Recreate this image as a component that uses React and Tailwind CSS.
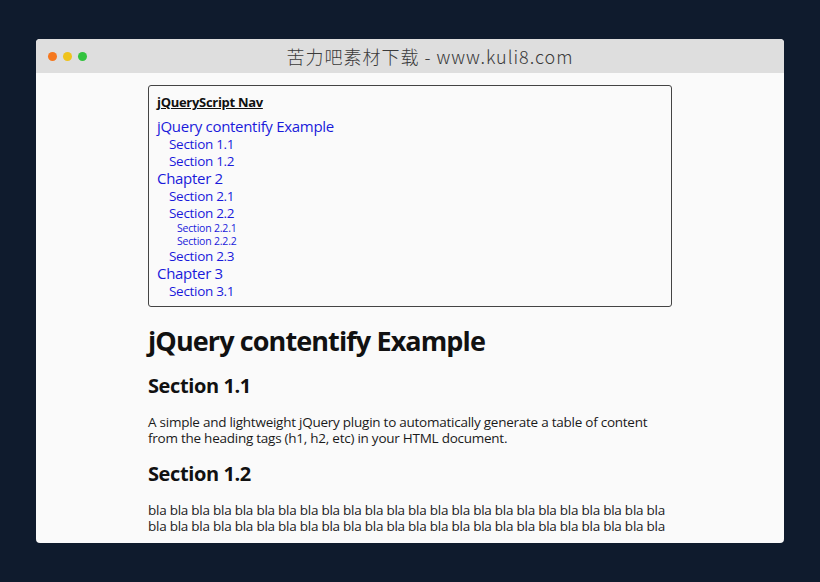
export default function App() {
  const toc = [
    { label: "jQuery contentify Example", level: 1 },
    { label: "Section 1.1", level: 2 },
    { label: "Section 1.2", level: 2 },
    { label: "Chapter 2", level: 1 },
    { label: "Section 2.1", level: 2 },
    { label: "Section 2.2", level: 2 },
    { label: "Section 2.2.1", level: 3 },
    { label: "Section 2.2.2", level: 3 },
    { label: "Section 2.3", level: 2 },
    { label: "Chapter 3", level: 1 },
    { label: "Section 3.1", level: 2 },
  ];

  const levelClass = {
    1: "text-[15px] leading-[17px] pl-0 mt-[1px] tracking-[-0.3px]",
    2: "text-[13.5px] leading-[16px] pl-[12px] mt-[1px] tracking-[-0.3px]",
    3: "text-[10.5px] leading-[12px] pl-[20px] mt-[1px] tracking-[-0.2px]",
  };

  return (
    <div className="min-h-screen bg-[#0f1b2d] px-[36px] pt-[39px] pb-[39px]">
      <div
        className="h-[504px] w-[748px] overflow-hidden rounded-[4px] bg-[#fafafa]"
        style={{ fontFamily: '"Open Sans", "Noto Sans", sans-serif' }}
      >
        {/* window bar */}
        <div className="relative flex h-[34px] items-center bg-[#dedede]">
          <div className="flex gap-[6px] pl-[12px]">
            <span className="h-[9px] w-[9px] rounded-full bg-[#f5781f]" />
            <span className="h-[9px] w-[9px] rounded-full bg-[#efc31c]" />
            <span className="h-[9px] w-[9px] rounded-full bg-[#33c33f]" />
          </div>
          <div
            className="absolute inset-0 flex items-center justify-center pl-[40px] text-[18px] tracking-[1px] text-[#3a3a3a]"
            style={{ fontFamily: '"Noto Sans CJK SC", "DejaVu Sans", sans-serif', fontWeight: 300 }}
          >
            苦力吧素材下载 - www.kuli8.com
          </div>
        </div>

        {/* page */}
        <div className="mx-auto w-[524px] pt-[12px] text-[#111]">
          <nav className="rounded-[3px] border border-[#444] px-[8px] pt-[8px] pb-[7px]">
            <div className="mb-[7px] text-[13px] font-bold leading-[17px] tracking-[-0.3px] text-[#111] underline">
              jQueryScript Nav
            </div>
            {toc.map((t) => (
              <div key={t.label} className={`${levelClass[t.level]} text-[#1a1adb]`}>
                {t.label}
              </div>
            ))}
          </nav>

          <h1 className="mt-[17px] text-[27px] font-bold leading-[34px] tracking-[-0.9px] text-[#111]">
            jQuery contentify Example
          </h1>
          <h2 className="mt-[16px] text-[20px] font-bold leading-[24px] tracking-[-0.4px] text-[#111]">
            Section 1.1
          </h2>
          <p className="mt-[16px] text-[13.5px] leading-[16px] tracking-[-0.25px] text-[#1a1a1a]">
            A simple and lightweight jQuery plugin to automatically generate a table of content from the
            heading tags (h1, h2, etc) in your HTML document.
          </p>
          <h2 className="mt-[16px] text-[20px] font-bold leading-[24px] tracking-[-0.4px] text-[#111]">
            Section 1.2
          </h2>
          <p className="mt-[16px] text-[13.5px] leading-[16px] tracking-[-0.25px] text-[#1a1a1a]">
            {Array(48).fill("bla").join(" ")}
          </p>
        </div>
      </div>
    </div>
  );
}
